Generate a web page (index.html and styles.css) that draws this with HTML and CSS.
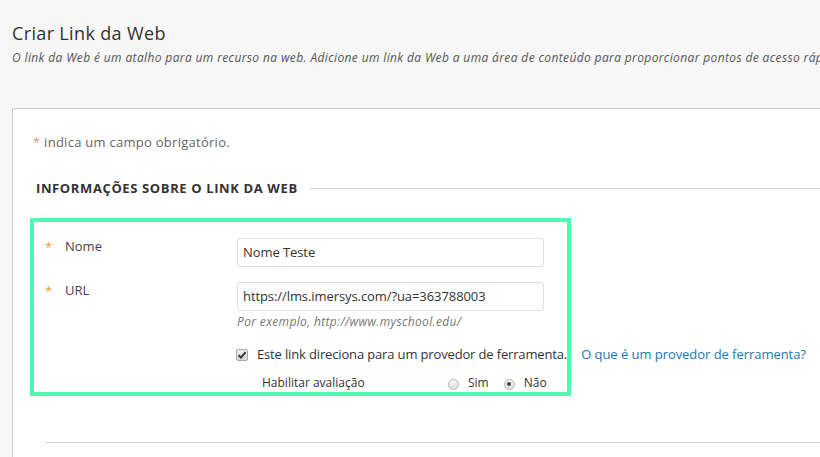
FILE: index.html
```html
<!DOCTYPE html>
<html lang="pt">
<head>
<meta charset="utf-8">
<title>Criar Link da Web</title>
<link rel="stylesheet" href="styles.css">
</head>
<body>
<header class="page-head">
  <h1 class="title">Criar Link da Web</h1>
  <p class="desc">O link da Web é um atalho para um recurso na web. Adicione um link da Web a uma área de conteúdo para proporcionar pontos de acesso rápido a recursos da web.</p>
</header>
<main class="panel">
  <p class="req-note"><span class="star">*</span> indica um campo obrigatório.</p>
  <div class="section-head">
    <h2 class="section-title">INFORMAÇÕES SOBRE O LINK DA WEB</h2>
    <span class="section-rule"></span>
  </div>
  <div class="form">
    <div class="field-row">
      <span class="star req">*</span>
      <label class="label">Nome</label>
      <div class="field">
        <div class="input">Nome Teste</div>
      </div>
    </div>
    <div class="field-row row-url">
      <span class="star req">*</span>
      <label class="label">URL</label>
      <div class="field">
        <div class="input">https://lms.imersys.com/?ua=363788003</div>
        <p class="hint">Por exemplo, http://www.myschool.edu/</p>
        <div class="check-row">
          <span class="checkbox"><svg width="10" height="10" viewBox="0 0 10 10"><path d="M1.6 5.2 L4 7.6 L8.6 2.2" fill="none" stroke="#333" stroke-width="2"/></svg></span>
          <span class="check-text">Este link direciona para um provedor de ferramenta.</span>
          <a class="help-link">O que é um provedor de ferramenta?</a>
        </div>
        <div class="grade-row">
          <span class="grade-label">Habilitar avaliação</span>
          <span class="radio"></span><span class="radio-text">Sim</span>
          <span class="radio checked"></span><span class="radio-text">Não</span>
        </div>
      </div>
    </div>
  </div>
  <div class="bottom-rule"></div>
</main>
<div class="highlight"></div>
</body>
</html>
```
FILE: styles.css
```css
* { box-sizing: border-box; }
html, body { margin: 0; padding: 0; }
body {
  background: #f7f7f7;
  font-family: "Open Sans", "Noto Sans", sans-serif;
  color: #333;
  width: 820px;
  height: 457px;
  overflow: hidden;
  position: relative;
}
.page-head { padding: 21px 0 0 12px; white-space: nowrap; overflow: hidden; }
.title {
  margin: 0;
  font-size: 18px;
  line-height: 24px;
  font-weight: 400;
  color: #333;
  letter-spacing: 0.35px;
}
.desc {
  margin: 4px 0 0;
  font-size: 12px;
  line-height: 18px;
  font-style: italic;
  color: #555;
  letter-spacing: 0.37px;
}
.panel {
  margin: 41px 0 0 12px;
  background: #fff;
  border-top: 1px solid #cdcdcd;
  border-left: 1px solid #cdcdcd;
  padding: 24px 0 0 20px;
  height: 349px;
}
.req-note {
  margin: 0;
  font-size: 13px;
  line-height: 18px;
  color: #666;
  letter-spacing: 0.27px;
}
.star { color: #f39a1e; }
.section-head {
  margin-top: 28px;
  padding-left: 3px;
  display: flex;
  align-items: center;
  gap: 12px;
}
.section-title {
  margin: 0;
  font-size: 13px;
  line-height: 18px;
  font-weight: 700;
  color: #333;
  letter-spacing: 0.62px;
}
.section-rule { flex: 1; height: 1px; background: #cfcfcf; }
.form { padding-left: 12px; margin-top: 40px; }
.field-row {
  display: grid;
  grid-template-columns: 20px 172px 307px;
  align-items: start;
}
.row-url { margin-top: 14px; }
.req { font-size: 13px; line-height: 18px; padding-top: 1px; }
.label { font-size: 13px; line-height: 18px; color: #444; }
.input {
  margin-top: 1px;
  height: 29px;
  border: 1px solid #dedede;
  border-radius: 3px;
  padding: 0 5px;
  font-size: 13px;
  line-height: 27px;
  color: #333;
  white-space: nowrap;
  letter-spacing: -0.08px;
}
.hint {
  margin: 3px 0 0;
  font-size: 12px;
  line-height: 16px;
  font-style: italic;
  color: #777;
  letter-spacing: 0.35px;
}
.check-row {
  margin-top: 15px;
  display: flex;
  align-items: center;
  white-space: nowrap;
  font-size: 13px;
  line-height: 18px;
  width: 600px;
}
.checkbox {
  flex-shrink: 0;
  width: 12px;
  height: 12px;
  margin: 1px 0 0 -1px;
  border: 1px solid #a9a9a9;
  border-radius: 2px;
  background: linear-gradient(#f0f0f0, #d6d6d6);
  display: flex;
  align-items: center;
  justify-content: center;
}
.check-text { margin-left: 9px; color: #333; letter-spacing: -0.15px; }
.help-link { margin-left: 14px; color: #2676ad; text-decoration: none; letter-spacing: -0.05px; }
.grade-row {
  margin-top: 12px;
  padding-left: 25px;
  display: flex;
  align-items: center;
  font-size: 12px;
  line-height: 16px;
  white-space: nowrap;
  width: 600px;
}
.grade-label { flex-shrink: 0; width: 186px; color: #333; }
.radio {
  flex-shrink: 0;
  width: 11px;
  height: 11px;
  border-radius: 50%;
  border: 1px solid #b4b4b4;
  background: linear-gradient(#fafafa, #dcdcdc);
  margin-top: 2px;
  position: relative;
}
.radio.checked::after {
  content: "";
  position: absolute;
  left: 2.5px;
  top: 2.5px;
  width: 4px;
  height: 4px;
  border-radius: 50%;
  background: #444;
}
.radio-text { margin-left: 9px; margin-right: 15px; color: #333; }
.bottom-rule {
  margin: 51px 0 0 12px;
  height: 1px;
  background: #d3d3d3;
}
.highlight {
  position: absolute;
  left: 30px;
  top: 218px;
  width: 541px;
  height: 178px;
  border: 4px solid #4ffab0;
  pointer-events: none;
}
```
